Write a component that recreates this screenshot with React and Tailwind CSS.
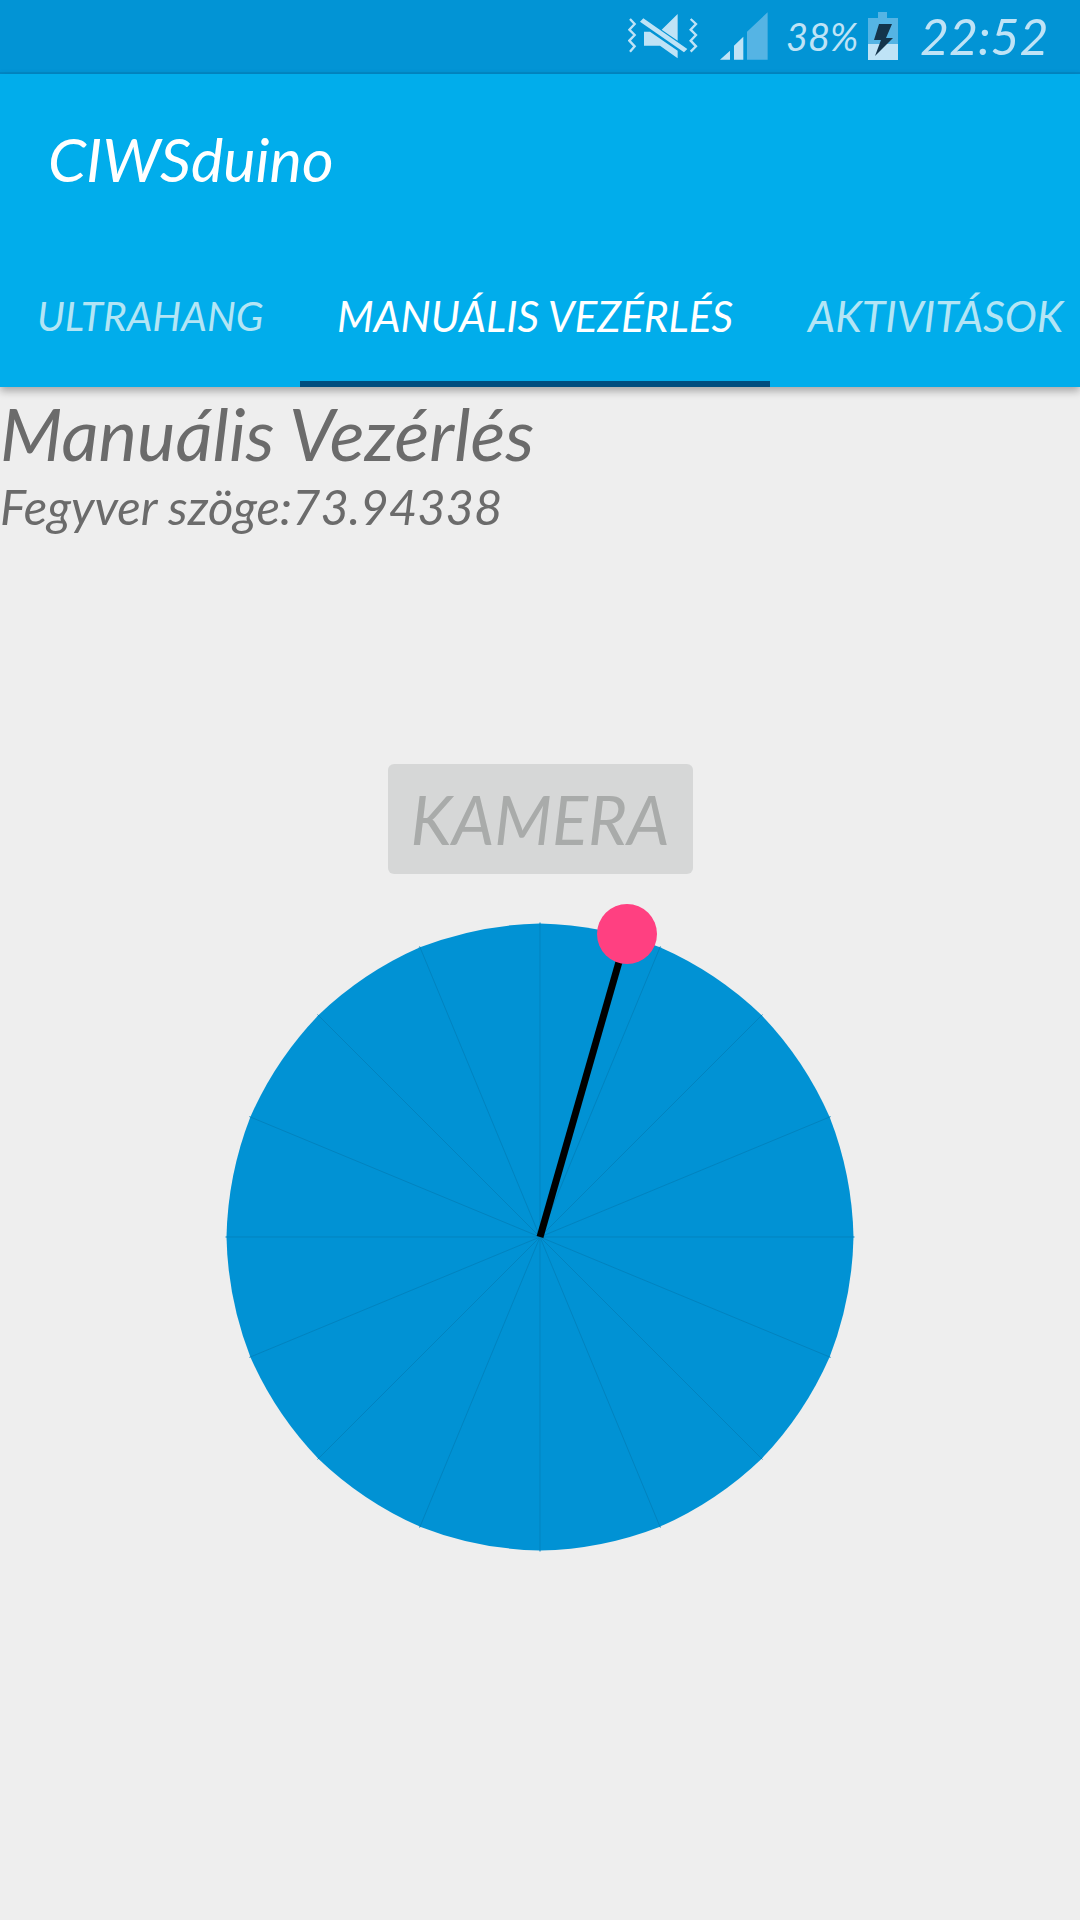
import React from "react";

const hand = "font-['Lato','Noto_Sans',sans-serif] italic";
const spokes = Array.from({ length: 16 }, (_, i) => (i * Math.PI) / 8);

function StatusIcons() {
  return (
    <svg viewBox="0 0 160 74" className="w-[160px] h-[74px] shrink-0 self-start">
      <g transform="translate(-28,0) scale(0.3333)">
        <path d="M90 60l14 15-16 17 16 16-16 17 16 17-14 16M272 60l16 15-16 17 16 16-16 17 16 17-16 16" fill="none" stroke="#bfe3f6" strokeWidth="7" />
        <path d="M130 58L262 150 252 160 120 68ZM185 92L233 45V125ZM132 98H150L233 155V178L180 140H132Z" fill="#bfe3f6" />
        <path d="M360 182L390 155V182ZM402 182V140L430 113V182Z" fill="#bfe3f6" />
        <path d="M441 182V98L503 40V182Z" fill="#55b4e4" />
      </g>
    </svg>
  );
}

function Battery() {
  return (
    <svg viewBox="0 0 30 48" className="w-[30px] h-[48px] shrink-0">
      <path d="M10 0H19V6H30V32H0V6H10Z" fill="#55b4e4" />
      <path d="M0 32H30V48H0Z" fill="#bfe3f6" />
      <path d="M11 12H24L18 26H25L7 44 13 28H6Z" fill="#14344b" />
    </svg>
  );
}

function Wheel() {
  const r = 313.5;
  const c = 320;
  const cy = 363;
  const outline =
    spokes
      .map((a, i) => `${i === 0 ? "M" : "A350 350 0 0 1"}${c + r * Math.cos(a)} ${cy + r * Math.sin(a)}`)
      .join(" ") + ` A350 350 0 0 1 ${c + r} ${cy}Z`;
  return (
    <svg viewBox="0 0 640 700" className="w-[640px] h-[700px] block">
      <path d={outline} fill="#0192d4" />
      {spokes.map((a) => (
        <line
          key={a}
          x1={c}
          y1={cy}
          x2={c + (r + 1) * Math.cos(a)}
          y2={cy + (r + 1) * Math.sin(a)}
          stroke="#0283bf"
          strokeWidth="1"
        />
      ))}
      <line x1={c} y1={cy} x2={407} y2={60} stroke="#000" strokeWidth="7" />
      <circle cx={407} cy={60} r={30} fill="#ff4081" />
    </svg>
  );
}

export default function App() {
  return (
    <div className={`w-[1080px] h-[1920px] bg-[#eeeeee] overflow-hidden ${hand}`}>
      <div className="h-[74px] bg-[#0294d5] border-b-2 border-[#0288c6] flex items-center pl-[628px]">
        <div className="w-[158px] overflow-hidden shrink-0">
          <StatusIcons />
        </div>
        <span className="text-[#bfe3f6] text-[38px] w-[82px] shrink-0">38%</span>
        <Battery />
        <span className="text-[#bfe3f6] text-[50px] ml-[22px] shrink-0">22:52</span>
      </div>

      <div className="h-[313px] bg-[#01adeb] shadow-[0_4px_8px_rgba(0,0,0,0.3)] relative flex flex-col">
        <h1 className="text-white text-[61px] leading-[70px] pl-[48px] pt-[50px] h-[177px]">CIWSduino</h1>
        <div className="flex flex-1">
          <div className="w-[300px] pl-[37px] pt-[40px] text-[40.7px] leading-[50px] text-[#b3e5f5]">ULTRAHANG</div>
          <div className="w-[470px] pl-[37px] pt-[40px] text-[42.5px] leading-[50px] text-white border-b-[6px] border-[#004e7f]">MANUÁLIS VEZÉRLÉS</div>
          <div className="pl-[38px] pt-[40px] text-[43px] leading-[50px] text-[#b3e5f5] whitespace-nowrap">AKTIVITÁSOK</div>
        </div>
      </div>

      <div className="text-[#6b6b6b]">
        <h2 className="text-[72.6px] leading-[80px] mt-[6px]">Manuális Vezérlés</h2>
        <p className="text-[49px] leading-[60px] mt-[3px]">Fegyver szöge:73.94338</p>
      </div>

      <div className="flex flex-col items-center mt-[228px]">
        <button className="w-[305px] h-[110px] bg-[#d6d7d7] rounded-[6px] text-[#a9abaa] text-[67px]">KAMERA</button>
        <Wheel />
      </div>
    </div>
  );
}
